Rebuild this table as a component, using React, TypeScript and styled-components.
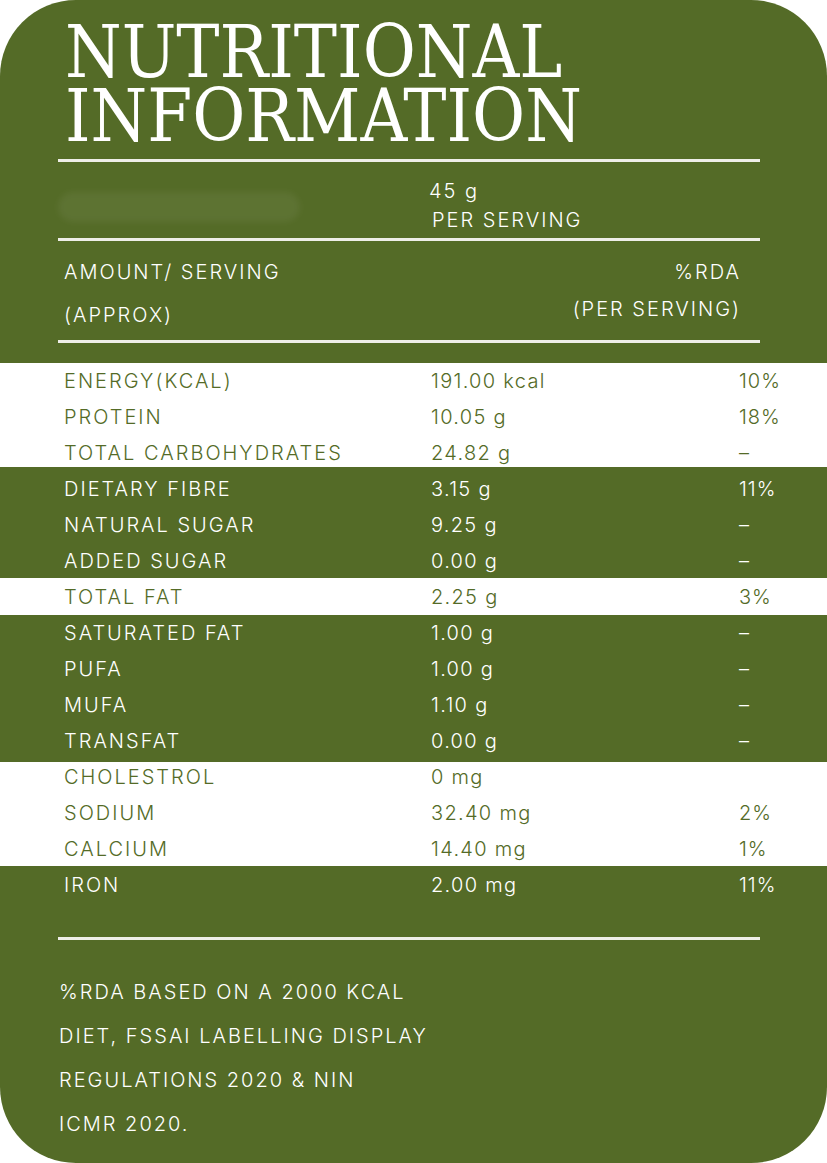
import React from "react";
import styled, { createGlobalStyle } from "styled-components";

const GREEN = "#546b27";

const GlobalStyle = createGlobalStyle`
  html, body {
    margin: 0;
    padding: 0;
    background: #ffffff;
  }
  * {
    box-sizing: border-box;
  }
`;

const Card = styled.div`
  width: 827px;
  height: 1163px;
  background: ${GREEN};
  border-radius: 76px;
  overflow: hidden;
  display: flex;
  flex-direction: column;
  font-family: Inter, "Liberation Sans", sans-serif;
  font-weight: 300;
  font-size: 20px;
  letter-spacing: 2px;
  color: #ffffff;
`;

const Title = styled.h1`
  margin: 20px 0 0;
  padding-left: 65px;
  font-family: "DejaVu Serif", "Liberation Serif", serif;
  font-stretch: condensed;
  font-weight: 400;
  font-size: 72px;
  line-height: 64px;
  letter-spacing: 0;
  color: #ffffff;
`;

const Divider = styled.hr<{ $top?: number }>`
  margin: ${(p) => p.$top || 0}px 67px 0 58px;
  height: 3px;
  border: none;
  background: #eeeee8;
  flex-shrink: 0;
`;

const ServingRow = styled.div`
  display: grid;
  grid-template-columns: 429px 1fr;
  padding: 15px 0 3px;
  line-height: 29px;
`;

const Blurred = styled.div`
  align-self: center;
  margin: 2px 0 0 58px;
  width: 242px;
  height: 30px;
  border-radius: 15px;
  background: rgba(255, 255, 255, 0.055);
  filter: blur(3px);
`;

const Stack = styled.div<{ $indent?: number; $align?: string; $lh: number; $top?: number }>`
  display: flex;
  flex-direction: column;
  align-items: ${(p) => p.$align || "flex-start"};
  padding-top: ${(p) => p.$top || 0}px;
  line-height: ${(p) => p.$lh}px;
  & > span:nth-child(2) {
    padding-left: ${(p) => p.$indent || 0}px;
  }
`;

const HeadRow = styled.div`
  display: flex;
  justify-content: space-between;
  padding: 10px 86px 3px 64px;
`;

const Table = styled.div`
  margin-top: 20px;
  display: flex;
  flex-direction: column;
`;

const Band = styled.div<{ $light?: boolean; $h?: number; $shift?: number }>`
  height: ${(p) => (p.$h ? `${p.$h}px` : "auto")};
  background: ${(p) => (p.$light ? "#ffffff" : GREEN)};
  color: ${(p) => (p.$light ? GREEN : "#ffffff")};
  & > div:first-child {
    margin-top: ${(p) => p.$shift || 0}px;
  }
`;

const Row = styled.div`
  display: grid;
  grid-template-columns: 367px 308px 1fr;
  padding-left: 64px;
  height: 36px;
  align-items: center;
  white-space: nowrap;
  & > span:nth-child(2) {
    letter-spacing: 1.3px;
  }
  & > span:nth-child(3) {
    letter-spacing: 1px;
  }
`;

const Note = styled.div`
  padding: 30px 0 0 59px;
  line-height: 44px;
`;

type Nutrient = [string, string, string];

const groups: { light: boolean; h?: number; shift?: number; rows: Nutrient[] }[] = [
  {
    light: true,
    h: 104,
    rows: [
      ["ENERGY(KCAL)", "191.00 kcal", "10%"],
      ["PROTEIN", "10.05 g", "18%"],
      ["TOTAL CARBOHYDRATES", "24.82 g", "–"],
    ],
  },
  {
    light: false,
    h: 111,
    shift: 4,
    rows: [
      ["DIETARY FIBRE", "3.15 g", "11%"],
      ["NATURAL SUGAR", "9.25 g", "–"],
      ["ADDED SUGAR", "0.00 g", "–"],
    ],
  },
  {
    light: true,
    h: 37,
    shift: 1,
    rows: [["TOTAL FAT", "2.25 g", "3%"]],
  },
  {
    light: false,
    h: 147,
    rows: [
      ["SATURATED FAT", "1.00 g", "–"],
      ["PUFA", "1.00 g", "–"],
      ["MUFA", "1.10 g", "–"],
      ["TRANSFAT", "0.00 g", "–"],
    ],
  },
  {
    light: true,
    h: 104,
    shift: -3,
    rows: [
      ["CHOLESTROL", "0 mg", ""],
      ["SODIUM", "32.40 mg", "2%"],
      ["CALCIUM", "14.40 mg", "1%"],
    ],
  },
  {
    light: false,
    shift: 1,
    rows: [["IRON", "2.00 mg", "11%"]],
  },
];

const App: React.FC = () => {
  return (
    <>
      <GlobalStyle />
      <Card>
        <Title>
          NUTRITIONAL
          <br />
          INFORMATION
        </Title>
        <Divider $top={11} />
        <ServingRow>
          <Blurred />
          <Stack $lh={29} $indent={3}>
            <span>45 g</span>
            <span>PER SERVING</span>
          </Stack>
        </ServingRow>
        <Divider />
        <HeadRow>
          <Stack $lh={43}>
            <span>AMOUNT/ SERVING</span>
            <span>(APPROX)</span>
          </Stack>
          <Stack $lh={37} $align="flex-end" $top={3}>
            <span>%RDA</span>
            <span>(PER SERVING)</span>
          </Stack>
        </HeadRow>
        <Divider />
        <Table>
          {groups.map((g, i) => (
            <Band key={i} $light={g.light} $h={g.h} $shift={g.shift}>
              {g.rows.map(([name, amount, rda]) => (
                <Row key={name}>
                  <span>{name}</span>
                  <span>{amount}</span>
                  <span>{rda}</span>
                </Row>
              ))}
            </Band>
          ))}
        </Table>
        <Divider $top={34} />
        <Note>
          %RDA BASED ON A 2000 KCAL
          <br />
          DIET, FSSAI LABELLING DISPLAY
          <br />
          REGULATIONS 2020 &amp; NIN
          <br />
          ICMR 2020.
        </Note>
      </Card>
    </>
  );
};

export default App;
